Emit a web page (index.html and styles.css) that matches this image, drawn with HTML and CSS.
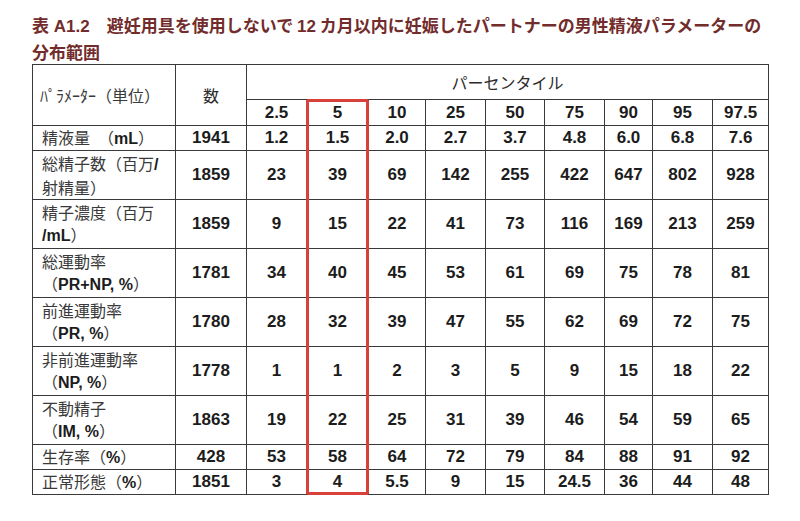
FILE: index.html
```html
<!DOCTYPE html>
<html lang="ja">
<head>
<meta charset="utf-8">
<title>表 A1.2</title>
<link rel="stylesheet" href="styles.css">
</head>
<body>
<div class="page">
  <h1 class="title"><span class="lat">表 A1.2</span>　避妊用具を使用しないで <span class="lat">12</span> カ月以内に妊娠したパートナーの男性精液パラメーターの<br>分布範囲</h1>
  <div class="table-wrap">
    <table class="data">
      <colgroup>
        <col class="c-label"><col class="c-n">
        <col class="c60"><col class="c62"><col class="c57"><col class="c60"><col class="c59"><col class="c60"><col class="c48"><col class="c60"><col class="c56">
      </colgroup>
      <thead>
        <tr class="h1">
          <th rowspan="2" class="label hdr-label">ﾊﾟﾗﾒｰﾀｰ（単位）</th>
          <th rowspan="2" class="jp-h">数</th>
          <th colspan="9" class="jp-h">パーセンタイル</th>
        </tr>
        <tr class="h2">
          <th>2.5</th><th>5</th><th>10</th><th>25</th><th>50</th><th>75</th><th>90</th><th>95</th><th>97.5</th>
        </tr>
      </thead>
      <tbody>
        <tr class="r1">
          <td class="label">精液量　（<span class="lat">mL</span>）</td>
          <td>1941</td><td>1.2</td><td>1.5</td><td>2.0</td><td>2.7</td><td>3.7</td><td>4.8</td><td>6.0</td><td>6.8</td><td>7.6</td>
        </tr>
        <tr class="r2">
          <td class="label">総精子数（百万<span class="lat">/</span><br>射精量）</td>
          <td>1859</td><td>23</td><td>39</td><td>69</td><td>142</td><td>255</td><td>422</td><td>647</td><td>802</td><td>928</td>
        </tr>
        <tr class="r2">
          <td class="label">精子濃度（百万<br><span class="lat">/mL</span>）</td>
          <td>1859</td><td>9</td><td>15</td><td>22</td><td>41</td><td>73</td><td>116</td><td>169</td><td>213</td><td>259</td>
        </tr>
        <tr class="r2">
          <td class="label">総運動率<br>（<span class="lat">PR+NP, %</span>）</td>
          <td>1781</td><td>34</td><td>40</td><td>45</td><td>53</td><td>61</td><td>69</td><td>75</td><td>78</td><td>81</td>
        </tr>
        <tr class="r2">
          <td class="label">前進運動率<br>（<span class="lat">PR, %</span>）</td>
          <td>1780</td><td>28</td><td>32</td><td>39</td><td>47</td><td>55</td><td>62</td><td>69</td><td>72</td><td>75</td>
        </tr>
        <tr class="r2">
          <td class="label">非前進運動率<br>（<span class="lat">NP, %</span>）</td>
          <td>1778</td><td>1</td><td>1</td><td>2</td><td>3</td><td>5</td><td>9</td><td>15</td><td>18</td><td>22</td>
        </tr>
        <tr class="r2">
          <td class="label">不動精子<br>（<span class="lat">IM, %</span>）</td>
          <td>1863</td><td>19</td><td>22</td><td>25</td><td>31</td><td>39</td><td>46</td><td>54</td><td>59</td><td>65</td>
        </tr>
        <tr class="r1">
          <td class="label">生存率（<span class="lat">%</span>）</td>
          <td>428</td><td>53</td><td>58</td><td>64</td><td>72</td><td>79</td><td>84</td><td>88</td><td>91</td><td>92</td>
        </tr>
        <tr class="r1">
          <td class="label">正常形態（<span class="lat">%</span>）</td>
          <td>1851</td><td>3</td><td>4</td><td>5.5</td><td>9</td><td>15</td><td>24.5</td><td>36</td><td>44</td><td>48</td>
        </tr>
      </tbody>
    </table>
    <div class="highlight"></div>
  </div>
</div>
</body>
</html>
```

FILE: styles.css
```css
html, body {
  margin: 0;
  padding: 0;
  background: #ffffff;
}

.page {
  width: 800px;
  height: 521px;
  padding: 12px 0 0 32px;
  box-sizing: border-box;
  overflow: hidden;
}

.title {
  margin: 0;
  font-family: "Noto Sans CJK JP", sans-serif;
  font-weight: 700;
  font-size: 17px;
  line-height: 25px;
  color: #722c2c;
  white-space: nowrap;
}

.title .lat {
  font-family: "Liberation Sans", "Noto Sans CJK JP", sans-serif;
  font-weight: 700;
}

.table-wrap {
  position: relative;
  width: 737px;
}

.data {
  border-collapse: collapse;
  table-layout: fixed;
  width: 737px;
  font-family: "Liberation Sans", "Noto Sans CJK JP", sans-serif;
  font-weight: 700;
  font-size: 17px;
  color: #1c1c1c;
}

.c-label { width: 143px; }
.c-n { width: 71px; }
.c60 { width: 60px; }
.c62 { width: 62px; }
.c57 { width: 57px; }
.c59 { width: 59px; }
.c48 { width: 48px; }
.c56 { width: 56px; }

.data th,
.data td {
  border: 1.5px solid #3a3a3a;
  padding: 0;
  text-align: center;
  vertical-align: middle;
  line-height: 22px;
}

.data th {
  font-weight: 700;
}

.h1 { height: 35px; }
.h2 { height: 26px; }
.r1 { height: 25px; }
.r2 { height: 49px; }

.jp-h {
  font-family: "Noto Sans CJK JP", sans-serif;
  font-size: 16px;
  font-weight: 400 !important;
  color: #2b2b2b;
}

.data .label {
  text-align: left;
  padding-left: 9px;
  font-family: "Noto Sans CJK JP", sans-serif;
  font-size: 16px;
  font-weight: 400;
  color: #3a3a3a;
  white-space: nowrap;
}

.data .hdr-label {
  padding-left: 7px;
}

.data .label .lat {
  font-family: "Liberation Sans", sans-serif;
  font-weight: 700;
  color: #1c1c1c;
}

.highlight {
  position: absolute;
  left: 274px;
  top: 35px;
  width: 63px;
  height: 396px;
  border: 3px solid #d8403a;
  border-radius: 2px;
  box-sizing: border-box;
  pointer-events: none;
}
```
